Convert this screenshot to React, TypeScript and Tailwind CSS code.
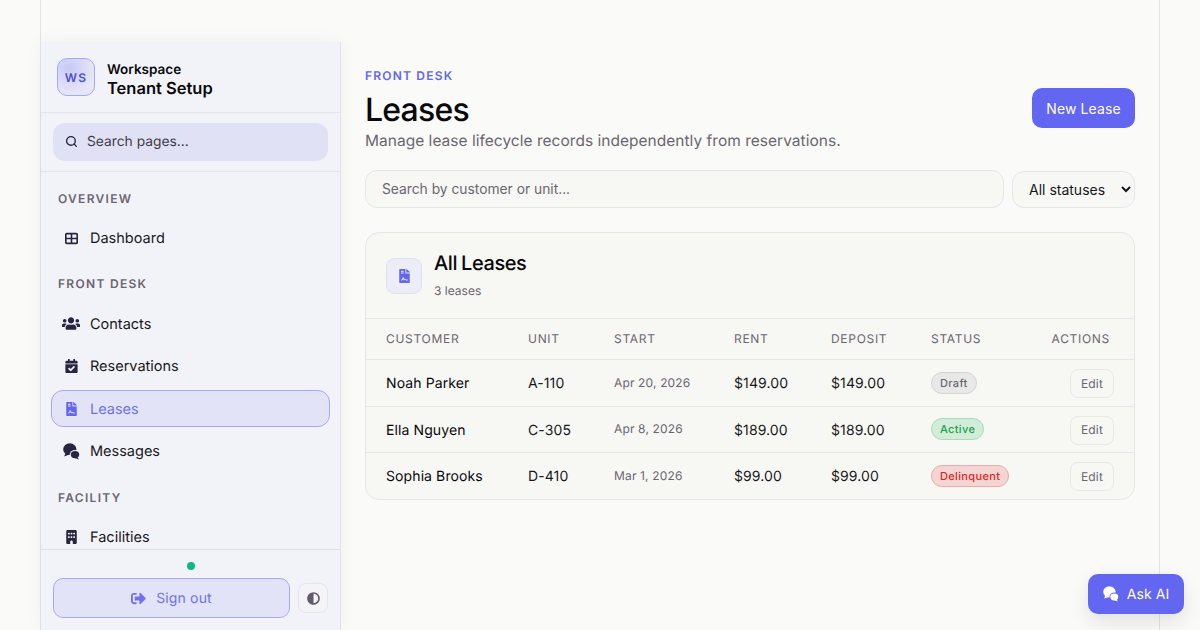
import { FaCalendarCheck, FaFileContract, FaSignOutAlt, FaUsers, FaAdjust } from "react-icons/fa";
import { FaBuilding, FaTableCellsLarge } from "react-icons/fa6";
import { Search } from "lucide-react";
import type { ReactNode } from "react";

const leases = [
  { name: "Noah Parker", unit: "A-110", start: "Apr 20, 2026", rent: "$149.00", deposit: "$149.00", status: "Draft", rowClass: "h-[47px]", badge: "bg-[#e8e8e6] border-[#d4d4d2] text-[#6b6672]" },
  { name: "Ella Nguyen", unit: "C-305", start: "Apr 8, 2026", rent: "$189.00", deposit: "$189.00", status: "Active", rowClass: "h-[46px]", badge: "bg-[#d3ecd9] border-[#a8dcb8] text-[#16a34a]" },
  { name: "Sophia Brooks", unit: "D-410", start: "Mar 1, 2026", rent: "$99.00", deposit: "$99.00", status: "Delinquent", rowClass: "h-[47px]", badge: "bg-[#f5d5d3] border-[#eeaaa6] text-[#dc2626]" },
];

// two overlapping speech bubbles, the small one cut out of the big one
const ChatIcon = ({ className }: { className?: string }) => (
  <svg viewBox="0 0 17 17" fill="currentColor" className={className}>
    <mask id="chat-cut">
      <rect width="17" height="17" fill="white" />
      <ellipse cx="12" cy="11.6" rx="5.2" ry="4.7" fill="black" />
    </mask>
    <g mask="url(#chat-cut)">
      <ellipse cx="6.8" cy="6.2" rx="6.6" ry="5.9" />
      <path d="M2.6 9.5 L1.2 13.4 L6.4 11.6 Z" />
    </g>
    <ellipse cx="12" cy="11.6" rx="4.2" ry="3.7" />
    <path d="M13.6 13.6 L16.2 16.6 L11 14.8 Z" />
  </svg>
);

const SectionLabel = ({ children }: { children: ReactNode }) => (
  <div className="pl-[17px] text-[12px] leading-[16px] font-semibold tracking-[1.3px] text-[#6b6672]">{children}</div>
);

const NavItem = ({ icon, label, active }: { icon: ReactNode; label: string; active?: boolean }) => (
  <div
    className={
      active
        ? "flex items-center h-[37px] ml-[10px] mr-[10px] pl-[9px] gap-[9px] rounded-[12px] border border-[#a5a8fb] bg-[#e3e3f7] text-[14.5px] font-[430] text-[#6f71f2]"
        : "flex items-center h-[37px] ml-[10px] mr-[10px] pl-[9px] gap-[9px] rounded-[12px] border border-transparent text-[14.5px] font-[430] text-[#18181b]"
    }
  >
    <span className={active ? "flex w-[20px] justify-center text-[#6366f1]" : "flex w-[20px] justify-center text-[#27253f]"}>{icon}</span>
    <span className="pt-[2px]">{label}</span>
  </div>
);

const Sidebar = () => (
  <aside className="mt-[42px] flex h-[588px] w-[300px] shrink-0 flex-col border-r border-[#e2e2e6] bg-[#f2f3f9] shadow-[0_0_16px_rgba(0,0,0,0.05)]">
    <div className="flex h-[71px] shrink-0 items-center gap-[12px] border-b border-[#e4e4ea] pl-[16px]">
      <div className="flex h-[38px] w-[38px] items-center justify-center rounded-[10px] border border-[#a5a8fb] bg-[radial-gradient(circle_at_30%_25%,#c8c9f6,#e6e6f9_70%)] pt-[1px] text-[12px] font-semibold tracking-[1.2px] text-[#4f50d0]">
        WS
      </div>
      <div className="pt-[6px]">
        <div className="text-[13.5px] leading-[16px] font-semibold text-[#09090b]">Workspace</div>
        <div className="text-[16.5px] leading-[20px] font-semibold text-[#09090b]">Tenant Setup</div>
      </div>
    </div>
    <div className="h-[59px] shrink-0 border-b border-[#e4e4ea] px-[12px] pt-[10px]">
      <div className="flex h-[38px] items-center gap-[9px] rounded-[12px] bg-[#e1e1f5] pl-[12px] text-[13.8px] text-[#3f3d4a]">
        <Search size={13} strokeWidth={2.5} className="-mt-[1px] text-[#27253f]" />
        Search pages...
      </div>
    </div>
    <nav className="min-h-0 flex-1 overflow-hidden pt-[19px]">
      <SectionLabel>OVERVIEW</SectionLabel>
      <div className="mt-[12.5px]">
        <NavItem icon={<FaTableCellsLarge className="h-[13px] w-[13px]" />} label="Dashboard" />
      </div>
      <div className="mt-[19.5px]">
        <SectionLabel>FRONT DESK</SectionLabel>
      </div>
      <div className="mt-[13px] flex flex-col gap-[5.5px]">
        <NavItem icon={<FaUsers className="h-[15px] w-[18px]" />} label="Contacts" />
        <NavItem icon={<FaCalendarCheck className="h-[14px] w-[13px]" />} label="Reservations" />
        <NavItem icon={<FaFileContract className="h-[14px] w-[11px]" />} label="Leases" active />
        <NavItem icon={<ChatIcon className="h-[17px] w-[17px]" />} label="Messages" />
      </div>
      <div className="mt-[20px]">
        <SectionLabel>FACILITY</SectionLabel>
      </div>
      <div className="mt-[13px]">
        <NavItem icon={<FaBuilding className="h-[14px] w-[11px]" />} label="Facilities" />
      </div>
    </nav>
    <div className="h-[81px] shrink-0 border-t border-[#e0e0e6] px-[12px] pt-[12px]">
      <div className="mx-auto h-[8px] w-[8px] rounded-full bg-[#10b981]" />
      <div className="mt-[8px] flex items-center gap-[8px]">
        <div className="flex h-[40px] w-[237px] items-center justify-center gap-[10px] rounded-[10px] border border-[#a5a8fb] bg-[#e3e3f7] text-[14px] font-normal tracking-[0.15px] text-[#6f71f2]">
          <FaSignOutAlt className="text-[15px]" />
          Sign out
        </div>
        <div className="flex h-[30px] w-[30px] items-center justify-center rounded-[8px] border border-[#e4e4ea] bg-[#f4f4f8] text-[13px] text-[#5f5b6b]">
          <FaAdjust />
        </div>
      </div>
    </div>
  </aside>
);

const LeasesTable = () => (
  <div className="mt-[24px] overflow-hidden rounded-[14px] border border-[#e6e6e6] bg-[#f7f7f3]">
    <div className="flex h-[86px] items-center gap-[12px] border-b border-[#e6e6e6] pl-[20px]">
      <div className="flex h-[36px] w-[36px] items-center justify-center rounded-[9px] border border-[#dfdff5] bg-[#ededf8] text-[#6366f1]">
        <FaFileContract className="h-[14px] w-[11px]" />
      </div>
      <div className="mb-[4px]">
        <div className="text-[20px] leading-[28px] font-medium tracking-[-0.4px] [word-spacing:-1px] text-[#09090b]">All Leases</div>
        <div className="mt-[6px] text-[12px] leading-[16px] text-[#6b6672]">3 leases</div>
      </div>
    </div>
    <table className="w-full table-fixed border-collapse">
      <thead>
        <tr className="h-[40px] text-left text-[12px] tracking-[0.7px] text-[#6b6672]">
          <th className="w-[162px] pl-[20px] font-normal">CUSTOMER</th>
          <th className="w-[86px] font-normal">UNIT</th>
          <th className="w-[120px] font-normal">START</th>
          <th className="w-[97px] font-normal">RENT</th>
          <th className="w-[100px] font-normal">DEPOSIT</th>
          <th className="font-normal">STATUS</th>
          <th className="w-[104px] pr-[24px] text-right font-normal">ACTIONS</th>
        </tr>
      </thead>
      <tbody>
        {leases.map((lease) => (
          <tr key={lease.name} className={`${lease.rowClass} border-t border-[#e6e6e6] text-[14px] tracking-[0.1px] text-[#18181b]`}>
            <td className="pt-[2px] pl-[20px] font-[430] tracking-[0.1px] text-[#09090b]">{lease.name}</td>
            <td className="pt-[2px]">{lease.unit}</td>
            <td className="text-[12px] tracking-[0.15px] text-[#6b6672]">{lease.start}</td>
            <td className="pt-[2px]">{lease.rent}</td>
            <td className="pt-[2px]">{lease.deposit}</td>
            <td>
              <span className={`inline-block h-[22px] rounded-full border px-[8px] text-[11px] leading-[20px] font-[450] tracking-[0.35px] ${lease.badge}`}>
                {lease.status}
              </span>
            </td>
            <td className="pt-[2px] pr-[20px] text-right">
              <span className="inline-flex h-[29px] w-[44px] items-center justify-center rounded-[8px] border border-[#e8e8e8] text-[12px] font-normal tracking-[0.2px] text-[#6b6672]">
                Edit
              </span>
            </td>
          </tr>
        ))}
      </tbody>
    </table>
  </div>
);

export default function App() {
  return (
    <div className="relative h-[630px] w-[1200px] overflow-hidden bg-[#fafaf8] font-['Inter',sans-serif] antialiased [text-rendering:geometricPrecision]">
      <div className="mx-auto flex h-full w-[1120px] border-x border-[#e4e4e4]">
        <Sidebar />
        <main className="min-w-0 flex-1 px-[24px] pt-[68px]">
          <div className="text-[12px] leading-[16px] font-semibold tracking-[1.2px] text-[#6366f1]">FRONT DESK</div>
          <div className="flex items-start justify-between">
            <div>
              <h1 className="mt-[8px] text-[32px] leading-[36px] font-medium tracking-[-0.8px] text-[#09090b]">Leases</h1>
              <p className="text-[15.5px] leading-[25px] tracking-[0.02px] text-[#6b6672]">Manage lease lifecycle records independently from reservations.</p>
            </div>
            <button className="mt-[4px] h-[40px] w-[103px] rounded-[10px] bg-[#6366f1] text-[14px] font-normal tracking-[0.1px] text-white">New Lease</button>
          </div>
          <div className="mt-[17px] flex items-center gap-[8px]">
            <input
              readOnly
              placeholder="Search by customer or unit..."
              className="h-[38px] min-w-0 flex-1 rounded-[12px] border border-[#e6e6e6] bg-[#f7f7f3] px-[16px] pb-[1px] text-[13.8px] outline-none placeholder:text-[#6b6672]"
            />
            <select className="h-[37px] w-[123px] rounded-[12px] border border-[#e6e6e6] bg-[#f7f7f3] pl-[12px] text-[14px] text-[#18181b] outline-none">
              <option>All statuses</option>
            </select>
          </div>
          <LeasesTable />
        </main>
      </div>
      <div className="absolute right-[16px] bottom-[16px] flex h-[40px] w-[96px] items-center justify-center gap-[8px] rounded-[10px] bg-[#6366f1] text-[14px] font-normal tracking-[0.1px] text-white shadow-[0_8px_20px_rgba(0,0,0,0.1)]">
        <ChatIcon className="h-[16px] w-[16px]" />
        Ask AI
      </div>
    </div>
  );
}
